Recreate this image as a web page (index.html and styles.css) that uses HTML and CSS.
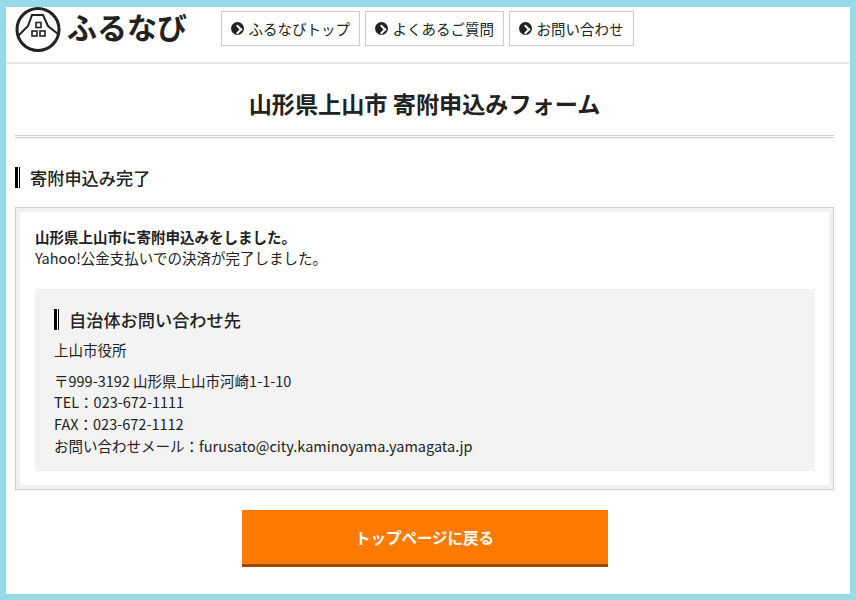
FILE: index.html
```html
<!DOCTYPE html>
<html lang="ja">
<head>
  <meta charset="UTF-8" />
  <title>山形県上山市 寄附申込みフォーム</title>
  <link rel="stylesheet" href="styles.css">
</head>
<body>

  <div id="page">
    <header class="site-header">
      <a class="logo" href="#">
        <svg class="logo-mark" width="46" height="46" viewBox="0 0 46 46">
          <circle cx="23" cy="22.5" r="21" fill="none" stroke="#222" stroke-width="3"/>
          <path d="M3 29 L13 19 L17 8 L28 8 L33 19 L43 27" fill="none" stroke="#222" stroke-width="2"/>
          <rect x="21" y="15.5" width="5" height="5" fill="none" stroke="#222" stroke-width="1.6"/>
          <rect x="17" y="24" width="5" height="5" fill="none" stroke="#222" stroke-width="1.6"/>
          <rect x="25" y="24" width="5" height="5" fill="none" stroke="#222" stroke-width="1.6"/>
        </svg>
        <span class="logo-text">ふるなび</span>
      </a>
      <nav class="nav">
        <a href="#"><span class="arrow"></span>ふるなびトップ</a>
        <a href="#"><span class="arrow"></span>よくあるご質問</a>
        <a href="#"><span class="arrow"></span>お問い合わせ</a>
      </nav>
    </header>

    <main class="content">
      <h1 class="page-title">山形県上山市 寄附申込みフォーム</h1>

      <h2 class="heading">寄附申込み完了</h2>

      <div class="box">
        <p class="message"><strong>山形県上山市に寄附申込みをしました。</strong><br>Yahoo!公金支払いでの決済が完了しました。</p>

        <div class="contact">
          <h3 class="heading heading-small">自治体お問い合わせ先</h3>
          <p class="office">上山市役所</p>
          <p class="address">〒999-3192 山形県上山市河崎1-1-10<br>TEL：023-672-1111<br>FAX：023-672-1112<br>お問い合わせメール：furusato@city.kaminoyama.yamagata.jp</p>
        </div>
      </div>

      <a class="back" href="#">トップページに戻る</a>
    </main>
  </div>

</body>
</html>
```

FILE: styles.css
```css
* {
  box-sizing: border-box;
}
html, body {
  margin: 0;
  padding: 0;
}
body {
  font-family: "Noto Sans CJK JP", "Noto Sans", sans-serif;
  font-size: 14.5px;
  color: #222;
  background: #fff;
}
a {
  color: inherit;
  text-decoration: none;
}
#page {
  height: 600px;
  overflow: hidden;
  border: solid #98d9ea;
  border-width: 7px 6px 6px;
  background: #fff;
}
.site-header {
  display: flex;
  height: 57px;
  padding-left: 9px;
  border-bottom: 2px solid #e6e6e6;
}
.logo {
  display: flex;
  align-items: flex-start;
  width: 206px;
}
.logo-mark {
  flex: none;
}
.logo-text {
  margin: -3px 0 0 6px;
  font-size: 30px;
  line-height: 44px;
  font-weight: 700;
  white-space: nowrap;
}
.nav {
  display: flex;
  gap: 5px;
  padding-top: 4px;
}
.nav a {
  display: flex;
  align-items: center;
  height: 35px;
  padding: 0 9px;
  border: 1px solid #ccc;
  font-size: 14.5px;
  white-space: nowrap;
}
.arrow {
  position: relative;
  width: 13px;
  height: 13px;
  margin-right: 4.5px;
  border-radius: 50%;
  background: #222;
}
.arrow::after {
  content: "";
  position: absolute;
  left: 2.5px;
  top: 4px;
  width: 5px;
  height: 5px;
  border: solid #fff;
  border-width: 2px 2px 0 0;
  transform: rotate(45deg);
}
.content {
  padding: 0 16px 0 9px;
}
.page-title {
  height: 74px;
  margin: 0;
  border-bottom: 3px double #ccc;
  font-size: 23.15px;
  line-height: 78px;
  font-weight: 700;
  text-align: center;
}
.heading {
  margin: 29px 0 19px;
  padding-left: 10px;
  border-left: 5px solid #000;
  font-size: 17.2px;
  line-height: 21px;
  font-weight: 500;
  position: relative;
}
.heading::before {
  content: "";
  position: absolute;
  left: -2px;
  top: 0;
  width: 1px;
  height: 100%;
  background: #fff;
}
.box {
  height: 283px;
  padding: 18px 18px 19px 15px;
  border: 1px solid #ccc;
  box-shadow: inset 0 0 0 4px #f1f1f1;
}
.message {
  margin: 0 4px 21px;
  line-height: 21px;
}
.message strong {
  font-weight: 700;
}
.contact {
  height: 182px;
  margin: 0 0 0 4px;
  padding: 20px 19px;
  background: #f3f3f3;
}
.heading-small {
  margin: 0 0 9px;
}
.office {
  margin: 0 0 9px;
  line-height: 21.5px;
}
.address {
  margin: 0;
  line-height: 21.7px;
}
.back {
  display: block;
  width: 366px;
  height: 57px;
  margin: 20px auto 0;
  border-bottom: 3px solid #a04a00;
  background: #ff7a00;
  color: #fff;
  font-size: 15.5px;
  font-weight: 700;
  line-height: 54px;
  text-align: center;
}
```
